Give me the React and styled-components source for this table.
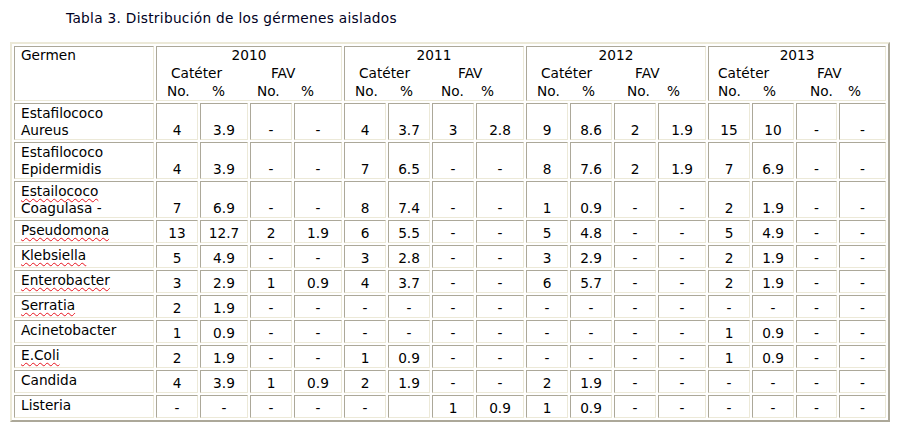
import React from 'react';
import styled, { createGlobalStyle } from 'styled-components';

const GlobalStyle = createGlobalStyle`
  html, body { margin: 0; padding: 0; background: #ffffff; }
  body {
    font-family: "DejaVu Sans", Verdana, sans-serif;
    font-size: 13.7px;
    line-height: 17px;
    color: #000000;
  }
`;

const Page = styled.div`
  padding: 10px 0 0 10px;
`;

const Title = styled.p`
  margin: 0 0 15px 56px;
  height: 17px;
  color: #000022;
  letter-spacing: 0.3px;
`;

const Table = styled.table`
  table-layout: fixed;
  width: 880px;
  border-collapse: separate;
  border-spacing: 2px;
  border: 2px solid;
  border-color: #ece9d8 #aca899 #aca899 #ece9d8;
  font-size: inherit;
  line-height: inherit;
`;

const Col = styled.col`
  width: ${(p) => p.$w}px;
`;

const Cell = styled.td`
  border: 1px solid;
  border-color: #aca899 #ece9d8 #ece9d8 #aca899;
  padding: 0;
`;

const GermenHead = styled(Cell)`
  vertical-align: top;
  padding-left: 6px;
`;

const YearHead = styled(Cell)`
  vertical-align: top;
`;

const YearTitle = styled.div`
  text-align: center;
  height: 17px;
`;

const HeadLine = styled.div`
  display: grid;
  grid-template-columns: ${(p) => p.$cols};
  padding-left: ${(p) => p.$pad}px;
  margin-top: 1px;
  height: 17px;
  white-space: nowrap;
`;

const NameCell = styled(Cell)`
  vertical-align: top;
  padding: 1px 0 0 6px;
  white-space: nowrap;
`;

const NumCell = styled(Cell)`
  vertical-align: bottom;
  text-align: center;
  padding-top: 4px;
`;

const Wavy = styled.span`
  text-decoration-line: underline;
  text-decoration-style: wavy;
  text-decoration-color: #e8141e;
  text-decoration-thickness: 1px;
  text-decoration-skip-ink: none;
  text-underline-offset: 2px;
`;

const widths = [140, 42, 48, 42, 48, 42, 42, 42, 48, 42, 42, 42, 48, 42, 42, 41, 47];

const years = [
  { y: '2010', cat: 16, fav: 116, no1: 12, p1: 57, no2: 102, p2: 146 },
  { y: '2011', cat: 16, fav: 115, no1: 12, p1: 57, no2: 98, p2: 138 },
  { y: '2012', cat: 16, fav: 110, no1: 12, p1: 57, no2: 102, p2: 142 },
  { y: '2013', cat: 11, fav: 110, no1: 11, p1: 56, no2: 103, p2: 141 },
];

const rows = [
  { name: [['Estafilococo'], ['Aureus']], v: ['4', '3.9', '-', '-', '4', '3.7', '3', '2.8', '9', '8.6', '2', '1.9', '15', '10', '-', '-'] },
  { name: [['Estafilococo'], ['Epidermidis']], v: ['4', '3.9', '-', '-', '7', '6.5', '-', '-', '8', '7.6', '2', '1.9', '7', '6.9', '-', '-'] },
  { name: [['Estailococo', true], ['Coagulasa -']], v: ['7', '6.9', '-', '-', '8', '7.4', '-', '-', '1', '0.9', '-', '-', '2', '1.9', '-', '-'] },
  { name: [['Pseudomona', true]], v: ['13', '12.7', '2', '1.9', '6', '5.5', '-', '-', '5', '4.8', '-', '-', '5', '4.9', '-', '-'] },
  { name: [['Klebsiella', true]], v: ['5', '4.9', '-', '-', '3', '2.8', '-', '-', '3', '2.9', '-', '-', '2', '1.9', '-', '-'] },
  { name: [['Enterobacter', true]], v: ['3', '2.9', '1', '0.9', '4', '3.7', '-', '-', '6', '5.7', '-', '-', '2', '1.9', '-', '-'] },
  { name: [['Serratia', true]], v: ['2', '1.9', '-', '-', '-', '-', '-', '-', '-', '-', '-', '-', '-', '-', '-', '-'] },
  { name: [['Acinetobacter']], v: ['1', '0.9', '-', '-', '-', '-', '-', '-', '-', '-', '-', '-', '1', '0.9', '-', '-'] },
  { name: [['E.Coli', true]], v: ['2', '1.9', '-', '-', '1', '0.9', '-', '-', '-', '-', '-', '-', '1', '0.9', '-', '-'] },
  { name: [['Candida']], v: ['4', '3.9', '1', '0.9', '2', '1.9', '-', '-', '2', '1.9', '-', '-', '-', '-', '-', '-'] },
  { name: [['Listeria']], v: ['-', '-', '-', '-', '-', '', '1', '0.9', '1', '0.9', '-', '-', '-', '-', '-', '-'] },
];

function YearHeader({ yr }) {
  const pad = 2;
  return (
    <YearHead colSpan={4}>
      <YearTitle>{yr.y}</YearTitle>
      <HeadLine $pad={yr.cat - pad} $cols={`${yr.fav - yr.cat}px auto`}>
        <span>Catéter</span>
        <span>FAV</span>
      </HeadLine>
      <HeadLine
        $pad={yr.no1 - pad}
        $cols={`${yr.p1 - yr.no1}px ${yr.no2 - yr.p1}px ${yr.p2 - yr.no2}px auto`}
      >
        <span>No.</span>
        <span>%</span>
        <span>No.</span>
        <span>%</span>
      </HeadLine>
    </YearHead>
  );
}

function Name({ lines }) {
  return lines.map(([text, wavy], i) => (
    <React.Fragment key={i}>
      {i > 0 && <br />}
      {wavy ? <Wavy>{text}</Wavy> : text}
    </React.Fragment>
  ));
}

export default function App() {
  return (
    <>
      <GlobalStyle />
      <Page>
        <Title>Tabla 3. Distribución de los gérmenes aislados</Title>
        <Table>
          <colgroup>
            {widths.map((w, i) => (
              <Col key={i} $w={w} />
            ))}
          </colgroup>
          <tbody>
            <tr>
              <GermenHead>Germen</GermenHead>
              {years.map((yr) => (
                <YearHeader key={yr.y} yr={yr} />
              ))}
            </tr>
            {rows.map((r, i) => (
              <tr key={i}>
                <NameCell>
                  <Name lines={r.name} />
                </NameCell>
                {r.v.map((val, j) => (
                  <NumCell key={j}>{val}</NumCell>
                ))}
              </tr>
            ))}
          </tbody>
        </Table>
      </Page>
    </>
  );
}
